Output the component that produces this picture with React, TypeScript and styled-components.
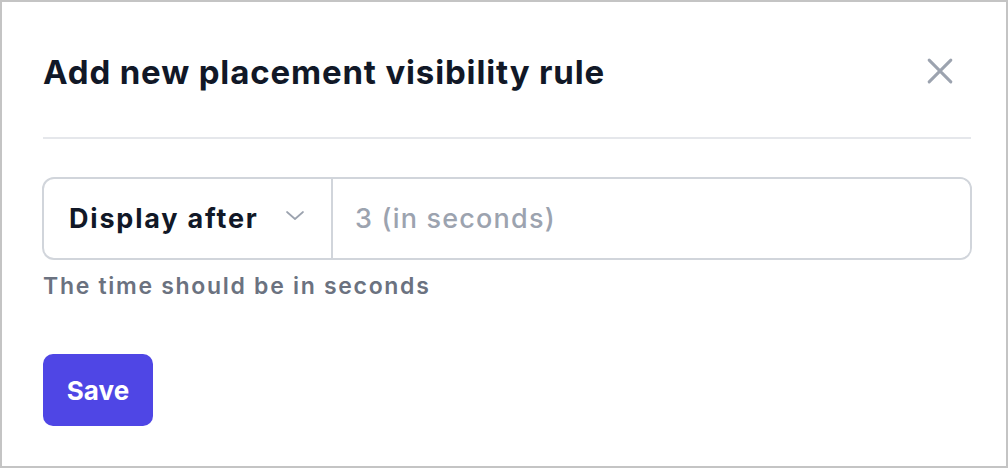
import React from "react";
import styled, { createGlobalStyle } from "styled-components";

const Global = createGlobalStyle`
  html, body { margin: 0; padding: 0; background: #fff; }
  body { font-family: Inter, "Noto Sans", sans-serif; }
  * { box-sizing: border-box; }
`;

const Frame = styled.div`
  width: 1008px;
  height: 468px;
  border: 2px solid #c4c4c4;
  background: #fff;
  padding: 39px 34px 0 40px;
  display: flex;
  flex-direction: column;
`;

const Header = styled.div`
  display: flex;
  align-items: center;
  justify-content: space-between;
  height: 62px;
  padding-left: 1px;
`;

const Title = styled.h2`
  margin: 0;
  font-size: 33px;
  line-height: 1;
  font-weight: 700;
  color: #111827;
  letter-spacing: 0.85px;
`;

const CloseButton = styled.button`
  border: 0;
  background: none;
  padding: 0;
  margin: 0 18px 2px 0;
  width: 28px;
  height: 28px;
  display: flex;
  align-items: center;
  justify-content: center;
  color: #9ca3af;
  cursor: pointer;
`;

const Divider = styled.hr`
  margin: 34px 0 0 1px;
  width: 928px;
  border: 0;
  border-top: 2px solid #e5e7eb;
`;

const Body = styled.div`
  display: flex;
  flex-direction: column;
  padding-top: 38px;
`;

const InputGroup = styled.div`
  display: flex;
  height: 83px;
  border: 2px solid #d1d5db;
  border-radius: 12px;
  overflow: hidden;
`;

const SelectBox = styled.div`
  width: 289px;
  display: flex;
  align-items: center;
  justify-content: space-between;
  padding: 0 26px 0 25px;
  border-right: 2px solid #d1d5db;
  font-size: 27px;
  font-weight: 700;
  letter-spacing: 1.8px;
  color: #111827;
`;

const Chevron = styled.svg`
  margin-bottom: 7px;
  flex-shrink: 0;
`;

const TextInput = styled.input`
  flex: 1;
  border: 0;
  outline: none;
  padding: 0 22px;
  font-family: inherit;
  font-size: 27px;
  font-weight: 500;
  letter-spacing: 1.2px;
  color: #111827;
  &::placeholder { color: #9ca3af; }
`;

const Help = styled.p`
  margin: 12px 0 0 1px;
  font-size: 23px;
  font-weight: 600;
  letter-spacing: 1.7px;
  color: #6b7280;
`;

const SaveButton = styled.button`
  margin: 54px 0 0 1px;
  align-self: flex-start;
  width: 110px;
  height: 72px;
  border: 0;
  border-radius: 10px;
  background: #4f46e5;
  color: #fff;
  font-family: inherit;
  font-size: 26px;
  font-weight: 700;
  cursor: pointer;
`;

export default function App() {
  return (
    <>
      <Global />
      <Frame>
        <Header>
          <Title>Add new placement visibility rule</Title>
          <CloseButton aria-label="Close">
            <svg width="26" height="26" viewBox="0 0 24 24" fill="none" stroke="currentColor" strokeWidth="2.8" strokeLinecap="round">
              <path d="M2 2 L22 22 M22 2 L2 22" />
            </svg>
          </CloseButton>
        </Header>
        <Divider />
        <Body>
          <InputGroup>
            <SelectBox>
              <span>Display after</span>
              <Chevron width="20" height="11" viewBox="0 0 20 11" fill="none" stroke="#9ca3af" strokeWidth="1.7" strokeLinecap="round" strokeLinejoin="round">
                <path d="M2 2 L10 9 L18 2" />
              </Chevron>
            </SelectBox>
            <TextInput placeholder="3 (in seconds)" />
          </InputGroup>
          <Help>The time should be in seconds</Help>
          <SaveButton>Save</SaveButton>
        </Body>
      </Frame>
    </>
  );
}
